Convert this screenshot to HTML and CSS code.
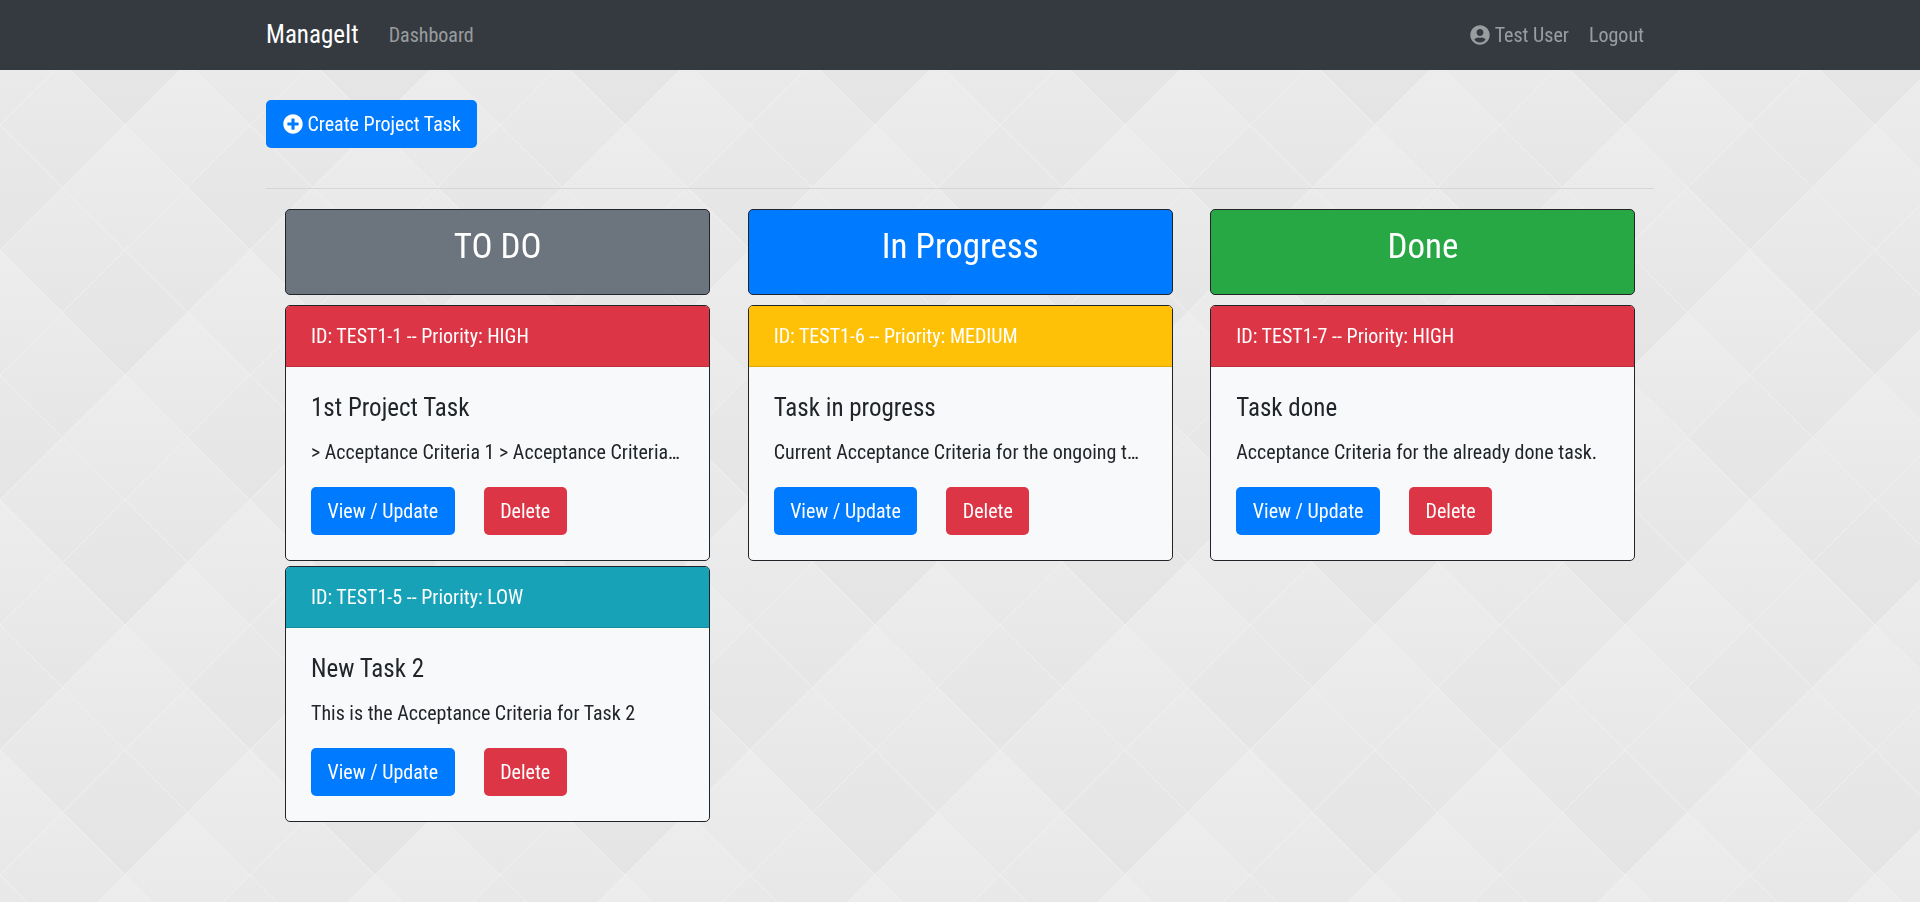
FILE: index.html
```html
<!DOCTYPE html>
<html lang="en">
<head>
<meta charset="utf-8">
<title>ManageIt</title>
<link rel="stylesheet" href="styles.css">
</head>
<body>
<svg class="backdrop" aria-hidden="true">
  <defs>
    <linearGradient id="g-bright" x1="0" y1="0" x2="0" y2="1"><stop offset="0" stop-color="#ededed"/><stop offset="1" stop-color="#e8e8e8"/></linearGradient>
    <linearGradient id="g-light" x1="0" y1="0" x2="0" y2="1"><stop offset="0" stop-color="#ebebeb"/><stop offset="1" stop-color="#e6e6e6"/></linearGradient>
    <linearGradient id="g-mid" x1="0" y1="0" x2="0" y2="1"><stop offset="0" stop-color="#e9e9e9"/><stop offset="1" stop-color="#e5e5e5"/></linearGradient>
    <linearGradient id="g-dim" x1="0" y1="0" x2="0" y2="1"><stop offset="0" stop-color="#e8e8e8"/><stop offset="1" stop-color="#e4e4e4"/></linearGradient>
    <pattern id="quilt" width="250" height="250" patternUnits="userSpaceOnUse">
      <rect width="250" height="250" fill="#e8e8e8"/>
      <path fill="url(#g-bright)" d="M125 125l62.5 62.5-62.5 62.5-62.5-62.5z"/>
      <path fill="url(#g-mid)" d="M0 125l62.5 62.5L0 250l-62.5-62.5z"/>
      <path fill="url(#g-mid)" d="M250 125l62.5 62.5L250 250l-62.5-62.5z"/>
      <path fill="url(#g-light)" d="M62.5 187.5l62.5 62.5-62.5 62.5L0 250z"/>
      <path fill="url(#g-light)" d="M187.5 187.5l62.5 62.5-62.5 62.5L125 250z"/>
      <path fill="url(#g-light)" d="M62.5 -62.5l62.5 62.5-62.5 62.5L0 0z"/>
      <path fill="url(#g-light)" d="M187.5 -62.5l62.5 62.5-62.5 62.5L125 0z"/>
      <path fill="url(#g-bright)" d="M0 0l62.5 62.5L0 125l-62.5-62.5z"/>
      <path fill="url(#g-bright)" d="M250 0l62.5 62.5L250 125l-62.5-62.5z"/>
      <path fill="url(#g-dim)" d="M125 0l62.5 62.5L125 125 62.5 62.5z"/>
      <path fill="url(#g-light)" d="M62.5 62.5l62.5 62.5-62.5 62.5L0 125z"/>
      <path fill="url(#g-bright)" d="M187.5 62.5l62.5 62.5-62.5 62.5-62.5-62.5z"/>
      <path fill="none" stroke="#f0f0f0" stroke-width="1" d="M0 0L250 250M-125 0L125 250M125 0L375 250M0 125L125 0M0 250L250 0M125 250L250 125"/>
    </pattern>
  </defs>
  <rect width="100%" height="100%" fill="url(#quilt)"/>
</svg>

<nav class="navbar">
  <div class="wrap navbar-inner">
    <a class="brand" href="#">ManageIt</a>
    <a class="nav-link" href="#">Dashboard</a>
    <div class="nav-right">
      <a class="nav-link nav-user" href="#">
        <svg class="icon" viewBox="0 0 496 512"><path fill="currentColor" d="M248 8C111 8 0 119 0 256s111 248 248 248 248-111 248-248S385 8 248 8zm0 96c48.6 0 88 39.4 88 88s-39.4 88-88 88-88-39.4-88-88 39.4-88 88-88zm0 344c-58.7 0-111.3-26.6-146.5-68.2 18.8-35.4 55.6-59.8 98.5-59.8 2.4 0 4.8.4 7.1 1.1 13 4.2 26.6 6.9 40.9 6.9 14.3 0 28-2.7 40.9-6.9 2.3-.7 4.7-1.1 7.1-1.1 42.9 0 79.7 24.4 98.5 59.8C359.3 421.4 306.7 448 248 448z"/></svg>
        Test User
      </a>
      <a class="nav-link" href="#">Logout</a>
    </div>
  </div>
</nav>

<main class="wrap">
  <a class="btn btn-blue btn-create" href="#">
    <svg class="icon" viewBox="0 0 512 512"><path fill="currentColor" d="M256 8C119 8 8 119 8 256s111 248 248 248 248-111 248-248S393 8 256 8zm144 276c0 6.6-5.4 12-12 12h-92v92c0 6.6-5.4 12-12 12h-56c-6.6 0-12-5.4-12-12v-92h-92c-6.6 0-12-5.4-12-12v-56c0-6.6 5.4-12 12-12h92v-92c0-6.6 5.4-12 12-12h56c6.6 0 12 5.4 12 12v92h92c6.6 0 12 5.4 12 12v56z"/></svg>
    Create Project Task
  </a>
  <hr class="rule">
  <div class="board">
    <section class="column">
      <h3 class="col-title bg-gray">TO DO</h3>
      <article class="task">
        <header class="task-head bg-red">ID: TEST1-1 -- Priority: HIGH</header>
        <div class="task-body">
          <h5 class="task-title">1st Project Task</h5>
          <p class="task-text">&gt; Acceptance Criteria 1 &gt; Acceptance Criteria 2 &gt; Acceptance Criteria 3</p>
          <div class="task-actions"><a class="btn btn-blue" href="#">View / Update</a><a class="btn btn-red" href="#">Delete</a></div>
        </div>
      </article>
      <article class="task">
        <header class="task-head bg-teal">ID: TEST1-5 -- Priority: LOW</header>
        <div class="task-body">
          <h5 class="task-title">New Task 2</h5>
          <p class="task-text">This is the Acceptance Criteria for Task 2</p>
          <div class="task-actions"><a class="btn btn-blue" href="#">View / Update</a><a class="btn btn-red" href="#">Delete</a></div>
        </div>
      </article>
    </section>
    <section class="column">
      <h3 class="col-title bg-blue">In Progress</h3>
      <article class="task">
        <header class="task-head bg-yellow">ID: TEST1-6 -- Priority: MEDIUM</header>
        <div class="task-body">
          <h5 class="task-title">Task in progress</h5>
          <p class="task-text">Current Acceptance Criteria for the ongoing task in this project</p>
          <div class="task-actions"><a class="btn btn-blue" href="#">View / Update</a><a class="btn btn-red" href="#">Delete</a></div>
        </div>
      </article>
    </section>
    <section class="column">
      <h3 class="col-title bg-green">Done</h3>
      <article class="task">
        <header class="task-head bg-red">ID: TEST1-7 -- Priority: HIGH</header>
        <div class="task-body">
          <h5 class="task-title">Task done</h5>
          <p class="task-text">Acceptance Criteria for the already done task.</p>
          <div class="task-actions"><a class="btn btn-blue" href="#">View / Update</a><a class="btn btn-red" href="#">Delete</a></div>
        </div>
      </article>
    </section>
  </div>
</main>
</body>
</html>
```
FILE: styles.css
```css
* { box-sizing: border-box; }
html, body { margin: 0; height: 100%; }
body {
  font-family: "Roboto Condensed", Roboto, "Liberation Sans", sans-serif;
  font-stretch: 75%;
  font-size: 20px;
  line-height: 1.5;
  color: #212529;
  background: #e9e9e9;
}
a { text-decoration: none; }
.backdrop { position: fixed; inset: 0; width: 100%; height: 100%; z-index: -1; }
.wrap { width: 1388px; margin: 0 auto; }

.navbar { height: 70px; background: #343a40; }
.navbar-inner { height: 100%; display: flex; align-items: center; }
.brand { color: #fff; font-size: 25px; line-height: 36px; margin-right: 30px; }
.nav-link { color: rgba(255,255,255,.5); font-size: 20px; line-height: 30px; }
.nav-right { margin-left: auto; margin-right: 10px; display: flex; gap: 20px; }
.nav-user { display: flex; align-items: center; gap: 5px; }
.icon { width: 20px; height: 20px; flex: none; }

.btn { display: inline-flex; align-items: center; height: 48px; padding: 0 16.5px; border-radius: 5px; color: #fff; font-size: 20px; white-space: nowrap; }
.btn-blue { background: #007bff; }
.btn-red { background: #dc3545; }
.btn-create { margin-top: 30px; gap: 5px; }
.rule { border: 0; border-top: 1px solid #d6d6d6; margin: 40px 0 20px; }

.board { display: grid; grid-template-columns: repeat(3, minmax(0, 1fr)); }
.column { padding: 0 18.5px 0 19px; }
.col-title { margin: 0 0 10px; height: 86px; border: 1px solid #212529; border-radius: 5px; color: #fff; font-size: 35px; font-weight: 400; line-height: 74px; text-align: center; }
.bg-gray { background: #6c757d; }
.bg-blue { background: #007bff; }
.bg-green { background: #28a745; }
.bg-red { background: #dc3545; }
.bg-teal { background: #17a2b8; }
.bg-yellow { background: #ffc107; }

.task { margin-bottom: 5px; background: #f8f9fa; border: 1px solid #212529; border-radius: 5px; overflow: hidden; }
.task-head { height: 61px; padding: 15px 25px; color: #fff; font-size: 20px; line-height: 30px; border-bottom: 1px solid rgba(0,0,0,.125); }
.task-body { padding: 26px 25px 25px; }
.task-title { margin: 0 0 14px; font-size: 25px; font-weight: 400; line-height: 30px; }
.task-text { margin: 0 0 20px; font-size: 20px; line-height: 30px; white-space: nowrap; overflow: hidden; text-overflow: ellipsis; }
.task-actions { display: flex; gap: 29px; }
```
